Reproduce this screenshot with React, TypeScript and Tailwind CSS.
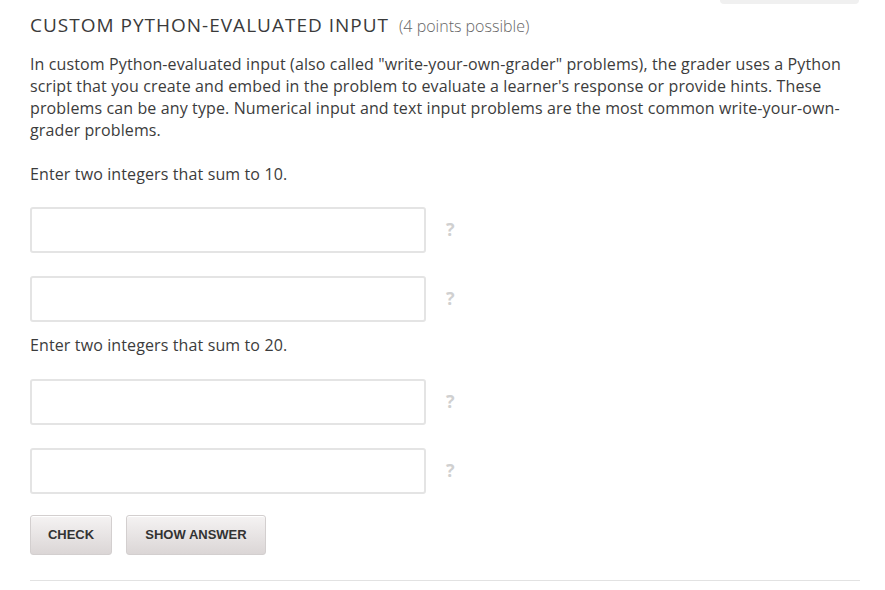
import React from "react";

const Field = () => (
  <div className="flex items-center">
    <input
      type="text"
      className="w-[396px] h-[46px] rounded-[3px] border-2 border-[#e4e4e4] bg-white px-2 outline-none"
    />
    <span className="ml-[20px] -mt-[1px] text-[18px] font-bold text-[#d0d0d0]">?</span>
  </div>
);

export default function App() {
  return (
    <div className="relative min-h-[590px] bg-white pl-[30px] pr-[25px] pt-[10px] text-[#3c3c3c] [font-family:'Open_Sans',sans-serif]">
      <div className="absolute right-[26px] top-0 h-[4px] w-[139px] rounded-b-[5px] bg-[#f0f0f0]" />

      <h2 className="flex items-baseline leading-[30px]">
        <span className="text-[19px] uppercase tracking-[1px] text-[#3a3a3a]">
          Custom Python-Evaluated Input
        </span>
        <span className="ml-[10px] text-[16px] font-light text-[#666]">(4 points possible)</span>
      </h2>

      <p className="mt-[12px] pr-[10px] text-[16px] leading-[22px] tracking-[0.12px]">
        In custom Python-evaluated input (also called "write-your-own-grader" problems), the grader uses a Python
        script that you create and embed in the problem to evaluate a learner's response or provide hints. These
        problems can be any type. Numerical input and text input problems are the most common write-your-own-grader
        problems.
      </p>

      <p className="mt-[22px] text-[16px] leading-[22px] tracking-[0.12px]">Enter two integers that sum to 10.</p>

      <div className="mt-[22px] flex flex-col gap-[23px]">
        <Field />
        <Field />
      </div>

      <p className="mt-[12px] text-[16px] leading-[22px] tracking-[0.12px]">Enter two integers that sum to 20.</p>

      <div className="mt-[23px] flex flex-col gap-[23px]">
        <Field />
        <Field />
      </div>

      <div className="mt-[21px] flex gap-[14px] [font-family:'Liberation_Sans',Arial,sans-serif]">
        <button className="h-[40px] w-[82px] rounded-[3px] border border-[#d3cfcf] bg-gradient-to-b from-[#f5f3f3] to-[#dbd6d6] text-[13px] font-bold text-[#333] shadow-[inset_0_1px_0_#fff]">
          CHECK
        </button>
        <button className="h-[40px] w-[140px] rounded-[3px] border border-[#d3cfcf] bg-gradient-to-b from-[#f5f3f3] to-[#dbd6d6] text-[13px] font-bold text-[#333] shadow-[inset_0_1px_0_#fff]">
          SHOW ANSWER
        </button>
      </div>

      <hr className="mt-[25px] border-t border-[#e2e2e2]" />
    </div>
  );
}
